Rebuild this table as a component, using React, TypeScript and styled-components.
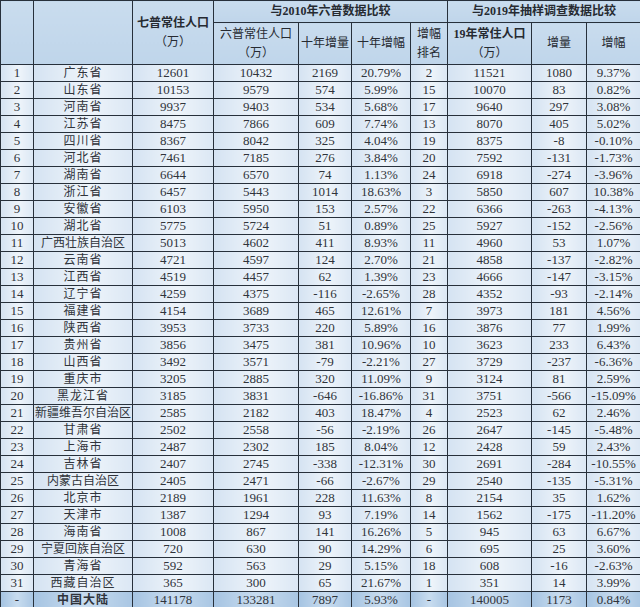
import React from "react";
import styled, { createGlobalStyle } from "styled-components";

type Row = [string, string, string, string, string, string, string, string, string];

const rows: Row[] = [
  ["广东省", "12601", "10432", "2169", "20.79%", "2", "11521", "1080", "9.37%"],
  ["山东省", "10153", "9579", "574", "5.99%", "15", "10070", "83", "0.82%"],
  ["河南省", "9937", "9403", "534", "5.68%", "17", "9640", "297", "3.08%"],
  ["江苏省", "8475", "7866", "609", "7.74%", "13", "8070", "405", "5.02%"],
  ["四川省", "8367", "8042", "325", "4.04%", "19", "8375", "-8", "-0.10%"],
  ["河北省", "7461", "7185", "276", "3.84%", "20", "7592", "-131", "-1.73%"],
  ["湖南省", "6644", "6570", "74", "1.13%", "24", "6918", "-274", "-3.96%"],
  ["浙江省", "6457", "5443", "1014", "18.63%", "3", "5850", "607", "10.38%"],
  ["安徽省", "6103", "5950", "153", "2.57%", "22", "6366", "-263", "-4.13%"],
  ["湖北省", "5775", "5724", "51", "0.89%", "25", "5927", "-152", "-2.56%"],
  ["广西壮族自治区", "5013", "4602", "411", "8.93%", "11", "4960", "53", "1.07%"],
  ["云南省", "4721", "4597", "124", "2.70%", "21", "4858", "-137", "-2.82%"],
  ["江西省", "4519", "4457", "62", "1.39%", "23", "4666", "-147", "-3.15%"],
  ["辽宁省", "4259", "4375", "-116", "-2.65%", "28", "4352", "-93", "-2.14%"],
  ["福建省", "4154", "3689", "465", "12.61%", "7", "3973", "181", "4.56%"],
  ["陕西省", "3953", "3733", "220", "5.89%", "16", "3876", "77", "1.99%"],
  ["贵州省", "3856", "3475", "381", "10.96%", "10", "3623", "233", "6.43%"],
  ["山西省", "3492", "3571", "-79", "-2.21%", "27", "3729", "-237", "-6.36%"],
  ["重庆市", "3205", "2885", "320", "11.09%", "9", "3124", "81", "2.59%"],
  ["黑龙江省", "3185", "3831", "-646", "-16.86%", "31", "3751", "-566", "-15.09%"],
  ["新疆维吾尔自治区", "2585", "2182", "403", "18.47%", "4", "2523", "62", "2.46%"],
  ["甘肃省", "2502", "2558", "-56", "-2.19%", "26", "2647", "-145", "-5.48%"],
  ["上海市", "2487", "2302", "185", "8.04%", "12", "2428", "59", "2.43%"],
  ["吉林省", "2407", "2745", "-338", "-12.31%", "30", "2691", "-284", "-10.55%"],
  ["内蒙古自治区", "2405", "2471", "-66", "-2.67%", "29", "2540", "-135", "-5.31%"],
  ["北京市", "2189", "1961", "228", "11.63%", "8", "2154", "35", "1.62%"],
  ["天津市", "1387", "1294", "93", "7.19%", "14", "1562", "-175", "-11.20%"],
  ["海南省", "1008", "867", "141", "16.26%", "5", "945", "63", "6.67%"],
  ["宁夏回族自治区", "720", "630", "90", "14.29%", "6", "695", "25", "3.60%"],
  ["青海省", "592", "563", "29", "5.15%", "18", "608", "-16", "-2.63%"],
  ["西藏自治区", "365", "300", "65", "21.67%", "1", "351", "14", "3.99%"],
];

const total: Row = ["中国大陆", "141178", "133281", "7897", "5.93%", "-", "140005", "1173", "0.84%"];

const widths = [33, 99, 81, 85, 53, 59, 37, 84, 55, 54];

const GlobalStyle = createGlobalStyle`
  html, body {
    margin: 0;
    padding: 0;
    background: #ffffff;
  }
  body {
    font-family: "Liberation Serif", "Noto Sans CJK SC", serif;
    color: #2b2f36;
  }
`;

const Table = styled.table`
  width: 640px;
  border-collapse: collapse;
  table-layout: fixed;
  font-size: 13px;
`;

const Head = styled.th<{ $bold?: boolean; $tall?: boolean }>`
  border: 1px solid #27303b;
  background: linear-gradient(to bottom, #c9dcee, #bfd5ea);
  font-weight: ${(p) => (p.$bold ? 700 : 400)};
  font-size: 12px;
  line-height: 19px;
  height: ${(p) => (p.$tall ? "41px" : "21px")};
  padding: 0;
  text-align: center;
  vertical-align: middle;
  white-space: nowrap;
  color: #262a31;
`;

const Cell = styled.td<{ $total?: boolean; $name?: boolean; $long?: boolean }>`
  border: 1px solid #27303b;
  height: 16px;
  line-height: 16px;
  padding: 0;
  text-align: center;
  white-space: nowrap;
  overflow: hidden;
  font-size: ${(p) => (p.$name ? "12px" : "13px")};
  letter-spacing: ${(p) => (p.$name && !p.$long ? "1px" : "0")};
  font-weight: ${(p) => (p.$total && p.$name ? 700 : 400)};
  background: ${(p) =>
    p.$total
      ? "linear-gradient(to right, #a6c4e2, #c8dcef 50%, #a9c6e3)"
      : "linear-gradient(to right, #d5e3f2, #eef4fa 55%, #dbe7f4)"};
  color: #30343b;
`;

const Sub = styled.span`
  display: block;
  font-weight: 400;
`;

export default function App() {
  return (
    <>
      <GlobalStyle />
      <Table>
        <colgroup>
          {widths.map((w, i) => (
            <col key={i} style={{ width: w }} />
          ))}
        </colgroup>
        <thead>
          <tr>
            <Head rowSpan={2} />
            <Head rowSpan={2} />
            <Head rowSpan={2} $bold>
              七普常住人口
              <Sub>（万）</Sub>
            </Head>
            <Head colSpan={4} $bold>
              与2010年六普数据比较
            </Head>
            <Head colSpan={3} $bold>
              与2019年抽样调查数据比较
            </Head>
          </tr>
          <tr>
            <Head $tall>
              六普常住人口
              <Sub>（万）</Sub>
            </Head>
            <Head $tall>十年增量</Head>
            <Head $tall>十年增幅</Head>
            <Head $tall>
              增幅
              <br />
              排名
            </Head>
            <Head $tall $bold>
              19年常住人口
              <Sub>（万）</Sub>
            </Head>
            <Head $tall>增量</Head>
            <Head $tall>增幅</Head>
          </tr>
        </thead>
        <tbody>
          {rows.map((r, i) => (
            <tr key={i}>
              <Cell>{i + 1}</Cell>
              {r.map((v, j) => (
                <Cell key={j} $name={j === 0} $long={j === 0 && v.length > 5}>
                  {v}
                </Cell>
              ))}
            </tr>
          ))}
          <tr>
            <Cell $total>-</Cell>
            {total.map((v, j) => (
              <Cell key={j} $total $name={j === 0}>
                {v}
              </Cell>
            ))}
          </tr>
        </tbody>
      </Table>
    </>
  );
}
